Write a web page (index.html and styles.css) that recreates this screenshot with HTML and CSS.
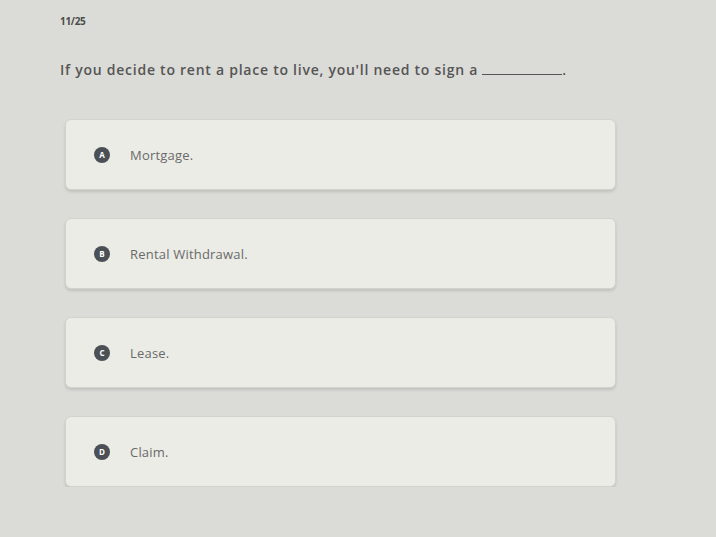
FILE: index.html
```html
<!DOCTYPE html>
<html>
  <head>
    <meta charset="UTF-8">
    <link rel="stylesheet" href="styles.css">
    <title>Quiz</title>
  </head>
  <body>
    <div class="quiz">
      <div class="counter">11/25</div>
      <p class="question">If you decide to rent a place to live, you'll need to sign a<span class="blank"></span>.</p>

      <div class="options">
        <div class="option">
          <span class="badge">A</span>
          <span class="label">Mortgage.</span>
        </div>
        <div class="option">
          <span class="badge">B</span>
          <span class="label">Rental Withdrawal.</span>
        </div>
        <div class="option">
          <span class="badge">C</span>
          <span class="label">Lease.</span>
        </div>
        <div class="option">
          <span class="badge">D</span>
          <span class="label">Claim.</span>
        </div>
      </div>
    </div>
  </body>
</html>
```

FILE: styles.css
```css
body {
    margin: 0;
    background-color: #dbdbd7;
    font-family: "Open Sans", "Liberation Sans", sans-serif;
    color: #555;
}

.quiz {
    padding: 14px 0 0 60px;
    width: 556px;
}

.counter {
    font-size: 10px;
    font-weight: 700;
    color: #4c4c4c;
    letter-spacing: -0.3px;
    height: 16px;
}

.question {
    margin: 30px 0 0;
    font-size: 14px;
    font-weight: 600;
    color: #555;
    letter-spacing: 0.75px;
}

.blank {
    display: inline-block;
    width: 80px;
    border-bottom: 1px solid #555;
    margin-left: 4px;
}

.options {
    display: flex;
    flex-direction: column;
    gap: 28px;
    margin-top: 40px;
    margin-left: 5px;
}

.option {
    display: flex;
    align-items: center;
    height: 71px;
    padding-left: 28px;
    background-color: #ececE6;
    border: 1px solid #d3d3cd;
    border-radius: 6px;
    box-shadow: 0 2px 3px rgba(0, 0, 0, 0.12);
    box-sizing: border-box;
    width: 551px;
}

.badge {
    display: flex;
    align-items: center;
    justify-content: center;
    width: 16px;
    height: 16px;
    border-radius: 50%;
    background-color: #4b5056;
    color: #fff;
    font-size: 8px;
    font-weight: 700;
}

.label {
    margin-left: 20px;
    font-size: 13px;
    color: #6a6a6a;
    letter-spacing: 0.2px;
}
```
